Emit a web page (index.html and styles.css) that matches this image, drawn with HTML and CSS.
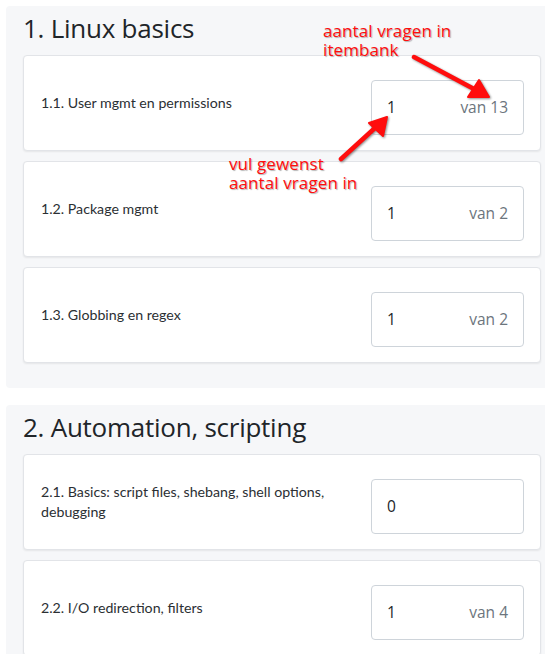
FILE: index.html
```html
<!DOCTYPE html>
<html lang="nl">
<head>
<meta charset="utf-8">
<title>Itembank</title>
<link rel="stylesheet" href="styles.css">
</head>
<body>
<main class="page">
  <section class="topic">
    <h2 class="topic-title">1. Linux basics</h2>
    <div class="card">
      <div class="label">1.1. User mgmt en permissions</div>
      <div class="field"><span class="value">1</span><span class="total">van 13</span></div>
    </div>
    <div class="card">
      <div class="label">1.2. Package mgmt</div>
      <div class="field"><span class="value">1</span><span class="total">van 2</span></div>
    </div>
    <div class="card">
      <div class="label">1.3. Globbing en regex</div>
      <div class="field"><span class="value">1</span><span class="total">van 2</span></div>
    </div>
  </section>
  <section class="topic">
    <h2 class="topic-title">2. Automation, scripting</h2>
    <div class="card">
      <div class="label">2.1. Basics: script files, shebang, shell options, debugging</div>
      <div class="field"><span class="value">0</span></div>
    </div>
    <div class="card">
      <div class="label">2.2. I/O redirection, filters</div>
      <div class="field"><span class="value">1</span><span class="total">van 4</span></div>
    </div>
  </section>
</main>
<div class="note note-bank">aantal vragen in<br>itembank</div>
<div class="note note-fill">vul gewenst<br>aantal vragen in</div>
<svg class="arrows" width="545" height="654" viewBox="0 0 545 654" aria-hidden="true">
  <g class="arrow">
    <line x1="414" y1="57" x2="474" y2="89" />
    <polygon points="489,97 468,97 479,80" />
  </g>
  <g class="arrow">
    <line x1="341" y1="159" x2="376" y2="127" />
    <polygon points="387,117 383,136 369,123" />
  </g>
</svg>
</body>
</html>
```
FILE: styles.css
```css
html, body {
  margin: 0;
  padding: 0;
  overflow: hidden;
  background: #ffffff;
}

body {
  position: relative;
  width: 545px;
  height: 654px;
}

.page {
  padding: 6px 0 0 6px;
  display: flex;
  flex-direction: column;
  gap: 17px;
  margin-right: -20px;
}

.topic {
  background: #f6f7f9;
  border-radius: 4px;
  padding: 6px 17px 25px 17px;
  display: flex;
  flex-direction: column;
  gap: 9.5px;
}

.topic-title {
  margin: 0 0 1px 0;
  height: 32px;
  font-family: "Open Sans", sans-serif;
  font-weight: 500;
  font-size: 26px;
  line-height: 32px;
  color: #212529;
  letter-spacing: -0.25px;
}

.card {
  background: #ffffff;
  border: 1px solid #e2e4e8;
  border-radius: 4px;
  box-shadow: 0 1px 2px rgba(0, 0, 0, 0.07);
  padding: 16px 16px 15.5px 17px;
  display: flex;
  gap: 17px;
  align-items: center;
  width: 483px;
}

.label {
  flex: 1;
  font-family: "Lato", sans-serif;
  font-size: 14.2px;
  line-height: 20px;
  color: #2b2f33;
}

.field {
  margin-top: 8px;
  box-sizing: border-box;
  width: 153px;
  height: 55px;
  border: 1px solid #ced4da;
  border-radius: 4px;
  padding: 0 15px;
  display: flex;
  justify-content: space-between;
  align-items: center;
  font-family: "Open Sans", sans-serif;
  font-size: 15.5px;
}

.value {
  color: #212529;
}

.total {
  color: #6c757d;
}

.note {
  position: absolute;
  font-family: "Open Sans", sans-serif;
  font-weight: 500;
  font-size: 17px;
  line-height: 19px;
  letter-spacing: 0.1px;
  color: #ff0d0d;
  text-shadow: 1px 1px 1px rgba(0, 0, 0, 0.3);
  white-space: nowrap;
}

.note-bank {
  left: 323px;
  top: 21px;
}

.note-fill {
  left: 229px;
  top: 154px;
}

.arrows {
  position: absolute;
  left: 0;
  top: 0;
  pointer-events: none;
}

.arrow {
  filter: drop-shadow(1px 1px 1px rgba(0, 0, 0, 0.45));
}

.arrow line {
  stroke: #ff0d0d;
  stroke-width: 4.5;
  stroke-linecap: round;
}

.arrow polygon {
  fill: #ff0d0d;
  stroke: #ff0d0d;
  stroke-width: 2;
  stroke-linejoin: round;
}
```
